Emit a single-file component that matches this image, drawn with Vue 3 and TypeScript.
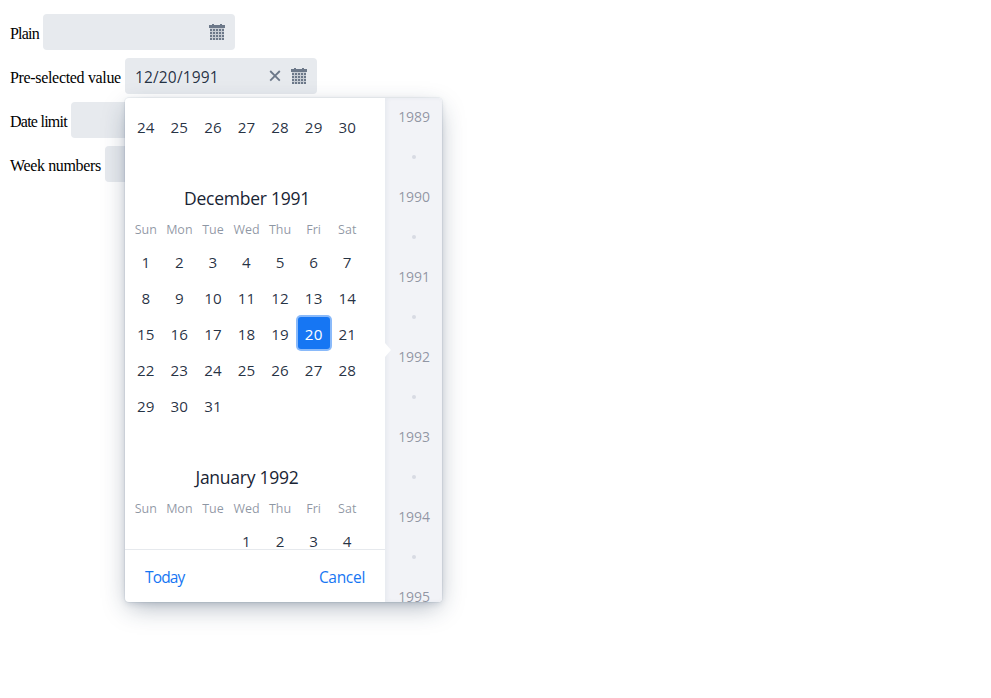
<script setup lang="ts">
interface Field {
  label: string
  value: string
}
interface Month {
  title: string
  offset: number
  days: number[]
}

const fields: Field[] = [
  { label: 'Plain', value: '' },
  { label: 'Pre-selected value', value: '12/20/1991' },
  { label: 'Date limit', value: '' },
  { label: 'Week numbers', value: '' },
]
const weekdays: string[] = ['Sun', 'Mon', 'Tue', 'Wed', 'Thu', 'Fri', 'Sat']
const range = (from: number, to: number): number[] =>
  Array.from({ length: to - from + 1 }, (_, i) => from + i)

const previousWeek: number[] = range(24, 30)
const months: Month[] = [
  { title: 'December 1991', offset: 0, days: range(1, 31) },
  { title: 'January 1992', offset: 3, days: range(1, 4) },
]
const selected = 20
const years: number[] = range(1989, 1995)
const cols = [1, 4, 7, 10, 13]
const rows = [5, 8, 11, 14]
</script>

<template>
  <main class="page">
    <div v-for="field in fields" :key="field.label" class="row">
      <label :class="['label', 'l' + field.label.length]">{{ field.label }}</label>
      <div class="field">
        <span class="value">{{ field.value }}</span>
        <svg v-if="field.value" class="clear" viewBox="0 0 16 16" width="16" height="16">
          <path d="M3.2 3 12.8 12.6M12.8 3 3.2 12.6" />
        </svg>
        <svg class="cal" viewBox="0 0 16 16" width="16" height="16">
          <path d="M0 1H3V0H5V1H11V0H13V1H16V4H0Z" />
          <rect class="grid" x="1" y="4" width="14" height="12" />
          <template v-for="y in rows" :key="y">
            <rect v-for="x in cols" :key="x" :x="x" :y="y" width="2" height="2" />
          </template>
        </svg>
      </div>
    </div>

    <section class="overlay">
      <div class="calendar">
        <div class="scroller">
          <div class="days lead">
            <span v-for="d in previousWeek" :key="d" class="day">{{ d }}</span>
          </div>
          <div v-for="(month, m) in months" :key="month.title" class="month">
            <h2 class="title">{{ month.title }}</h2>
            <div class="weekdays">
              <span v-for="w in weekdays" :key="w">{{ w }}</span>
            </div>
            <div class="days">
              <span v-for="n in month.offset" :key="'e' + n" class="day"></span>
              <span
                v-for="d in month.days"
                :key="d"
                :class="['day', { selected: m === 0 && d === selected }]"
              >{{ d }}</span>
            </div>
          </div>
        </div>
        <footer class="toolbar">
          <span>Today</span>
          <span>Cancel</span>
        </footer>
      </div>
      <div class="years">
        <div v-for="y in years" :key="y" class="year">
          <span>{{ y }}</span>
          <i class="dot"></i>
        </div>
      </div>
      <div class="marker"></div>
    </section>
  </main>
</template>

<style>
body {
  background: #fff;
}
</style>

<style scoped>
.page {
  position: relative;
  box-sizing: border-box;
  height: 698px;
  padding: 14px 10px;
  overflow: hidden;
  font-family: 'Open Sans', 'Noto Sans', sans-serif;
  color: hsla(214, 40%, 16%, 0.94);
}
.row {
  display: flex;
  align-items: flex-start;
  height: 36px;
  margin-bottom: 8px;
}
.label {
  flex: none;
  box-sizing: border-box;
  padding-top: 2px;
  font-family: 'Liberation Serif', serif;
  font-size: 16px;
  line-height: 36px;
  color: #000;
  white-space: nowrap;
}
.l5 {
  width: 33px;
  letter-spacing: -0.8px;
}
.l18 {
  width: 115px;
  letter-spacing: -0.33px;
}
.l10 {
  width: 61px;
  letter-spacing: -0.75px;
}
.l12 {
  width: 95px;
  letter-spacing: -0.36px;
}
.field {
  display: flex;
  align-items: center;
  box-sizing: border-box;
  width: 192px;
  height: 36px;
  padding: 0 10px;
  border-radius: 4px;
  background: #e7eaee;
}
.value {
  flex: 1;
  padding-top: 2px;
  font-size: 15.5px;
  letter-spacing: 0.15px;
  line-height: 36px;
}
.clear,
.cal {
  flex: none;
  fill: #6c7889;
}
.grid {
  fill: #6c7889;
  opacity: 0.25;
}
.clear {
  margin-right: 8px;
  fill: none;
  stroke: #6c7889;
  stroke-width: 1.8;
}
.overlay {
  position: absolute;
  left: 125px;
  top: 98px;
  display: flex;
  width: 317px;
  height: 504px;
  border-radius: 4px;
  background: #fff;
  box-shadow:
    0 0 0 1px hsla(214, 61%, 25%, 0.05),
    0 2px 6px -1px hsla(214, 53%, 23%, 0.16),
    0 8px 24px -4px hsla(214, 47%, 21%, 0.38);
}
.calendar {
  display: flex;
  flex-direction: column;
  width: 260px;
}
.scroller {
  flex: none;
  box-sizing: border-box;
  height: 451px;
  padding: 10px 21px 0 4px;
  overflow: hidden;
}
.days,
.weekdays {
  display: grid;
  grid-template-columns: repeat(7, 1fr);
}
.day {
  box-sizing: border-box;
  height: 36px;
  text-align: center;
  font-size: 15.2px;
  letter-spacing: 0.1px;
  line-height: 38px;
}
.month:last-child .days {
  height: 29px;
  overflow: hidden;
}
.selected {
  height: 32px;
  margin: 2px 0.8px;
  border-radius: 3px;
  background: #1676f3;
  color: #fff;
  box-shadow: 0 0 0 2px #8abafa;
  line-height: 34px;
}
.month {
  padding-top: 36px;
}
.title {
  margin: 0;
  text-align: center;
  font-size: 17.5px;
  font-weight: 400;
  letter-spacing: -0.25px;
  line-height: 37px;
  height: 36px;
  padding-left: 1px;
  color: hsl(214, 35%, 15%);
}
.weekdays {
  height: 27px;
  text-align: center;
  font-size: 12.5px;
  line-height: 28px;
  color: hsla(214, 45%, 20%, 0.5);
}
.toolbar {
  display: flex;
  justify-content: space-between;
  height: 52px;
  padding: 0 20px;
  border-top: 1px solid #e6e9ed;
  font-size: 15.5px;
  letter-spacing: -0.3px;
  line-height: 55px;
  color: #1676f3;
}
.toolbar span:first-child {
  letter-spacing: -0.85px;
}
.years {
  box-sizing: border-box;
  width: 57px;
  padding-left: 1px;
  overflow: hidden;
  border-radius: 0 4px 4px 0;
  background: #f2f3f7;
  box-shadow: inset 2px 0 4px 0 hsla(214, 61%, 25%, 0.05);
}
.year {
  display: flex;
  flex-direction: column;
  align-items: center;
  height: 80px;
  font-size: 14px;
  letter-spacing: -0.1px;
  line-height: 38px;
  color: hsla(224, 20%, 30%, 0.55);
}
.dot {
  width: 4px;
  height: 4px;
  margin-top: 19px;
  border-radius: 50%;
  background: #d8dbe3;
}
.marker {
  position: absolute;
  left: 260px;
  top: 245px;
  width: 6px;
  height: 14px;
  background: #fff;
  clip-path: polygon(0 0, 100% 50%, 0 100%);
}
</style>
